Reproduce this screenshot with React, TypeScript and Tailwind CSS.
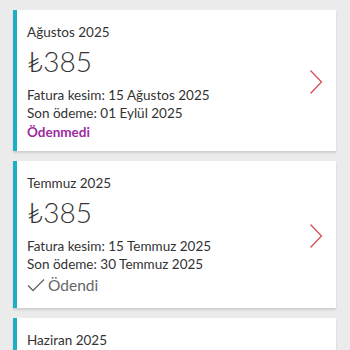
import React from 'react';

type Bill = {
  id: string;
  month: string;
  amount: string;
  issued: string;
  due: string;
  paid: boolean;
};

const bills: Bill[] = [
  { id: 'aug', month: 'Ağustos 2025', amount: '385', issued: '15 Ağustos 2025', due: '01 Eylül 2025', paid: false },
  { id: 'jul', month: 'Temmuz 2025', amount: '385', issued: '15 Temmuz 2025', due: '30 Temmuz 2025', paid: true },
  { id: 'jun', month: 'Haziran 2025', amount: '385', issued: '15 Haziran 2025', due: '30 Haziran 2025', paid: true },
];

const Chevron = () => (
  <svg width="14" height="26" viewBox="0 0 14 26" fill="none" className="flex-shrink-0">
    <path d="M1.5 1.5 L12.5 13 L1.5 24.5" stroke="#d4505a" strokeWidth="1.3" />
  </svg>
);

const Check = () => (
  <svg width="18" height="14" viewBox="0 0 18 14" fill="none" className="flex-shrink-0">
    <path d="M1 7.5 L6 12.5 L17 1.5" stroke="#666" strokeWidth="1.3" />
  </svg>
);

const BillCard: React.FC<{ bill: Bill }> = ({ bill }) => (
  <div className="flex bg-white shadow-[0_2px_2px_rgba(0,0,0,0.12)]">
    <div className="w-1 bg-[#1cb0c4] flex-shrink-0" />
    <div className="flex-1 flex items-center pl-[10px] pr-[13px] pt-[12px] pb-[9px]">
      <div className="flex-1 text-[#333]">
        <p className="text-[13.5px] leading-[20px]">{bill.month}</p>
        <p className="text-[28px] leading-[36px] font-light mt-[1px] mb-[7px]">₺{bill.amount}</p>
        <p className="text-[13.5px] leading-[18px]">Fatura kesim: {bill.issued}</p>
        <p className="text-[13.5px] leading-[18px]">Son ödeme: {bill.due}</p>
        {bill.paid ? (
          <div className="flex items-center gap-[3px] text-[15.5px] leading-[20px] text-[#666] mt-[2px] mb-[4px]">
            <Check />
            <span>Ödendi</span>
          </div>
        ) : (
          <p className="text-[13.5px] leading-[20px] font-bold text-[#9c2aa0]">Ödenmedi</p>
        )}
      </div>
      <Chevron />
    </div>
  </div>
);

export default function App() {
  return (
    <div className="w-[350px] h-[350px] overflow-hidden bg-[#ebebeb] flex" style={{ fontFamily: 'Lato, "Noto Sans", sans-serif' }}>
      <div className="flex-1 flex flex-col gap-[10px] pt-[10px] pl-[13px] pr-[14px]">
        {bills.map((b) => (
          <BillCard key={b.id} bill={b} />
        ))}
      </div>
    </div>
  );
}
